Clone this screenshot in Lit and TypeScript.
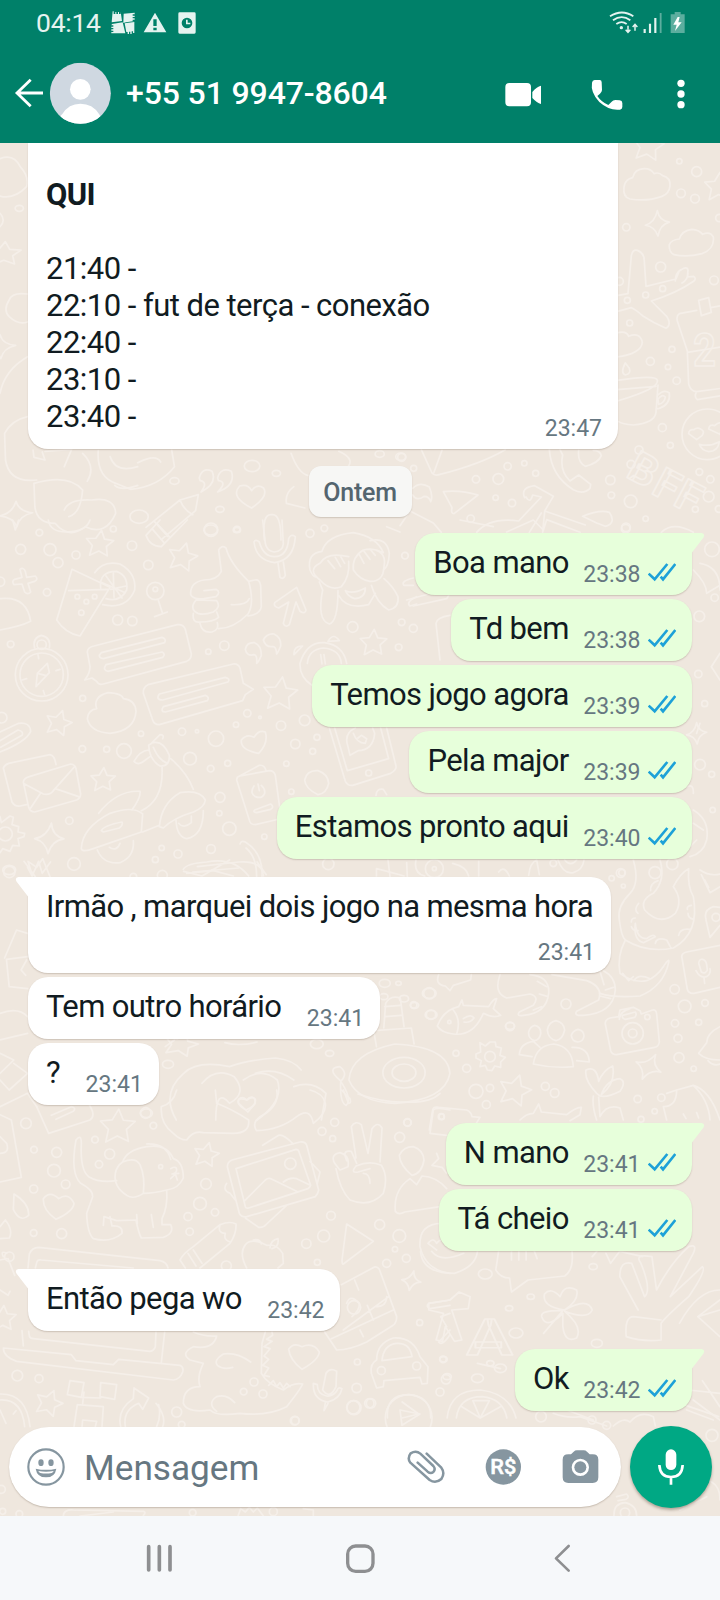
import { LitElement, html, css, svg } from "lit";
import { customElement, property } from "lit/decorators.js";
import { classMap } from "lit/directives/class-map.js";

type Dot = [number, number, number];
const dots = (list: Dot[]) => list.map(([x, y, r]) => svg`<circle cx=${x} cy=${y} r=${r}></circle>`);
const STAR = "M2 -44L14 -15L45 -12L22 9L27 40L-2 26L-32 42L-25 9L-46 -13L-15 -16Z";
const stars = (list: [number, number, number, number][]) =>
  list.map(([x, y, s, a]) => svg`<path d=${STAR} transform="translate(${x} ${y}) rotate(${a}) scale(${s})"></path>`);
const SPARK = "M0 -40Q6 -8 38 -4Q8 4 2 40Q-8 10 -38 6Q-8 -2 0 -40Z";
const sparks = (list: [number, number, number, number][]) =>
  list.map(([x, y, s, a]) => svg`<path d=${SPARK} transform="translate(${x} ${y}) rotate(${a}) scale(${s})"></path>`);

@customElement("chat-wallpaper")
export class ChatWallpaper extends LitElement {
  static styles = css`
    :host { display: block; }
    svg { display: block; }
    .doodles { fill: none; stroke: #f5efe9; stroke-width: 1.7; stroke-linecap: round; stroke-linejoin: round; }
    .doodles * { vector-effect: non-scaling-stroke; }
    .letters { font-family: Roboto, sans-serif; font-weight: 700; }
  `;
  render() {
    return html`<svg width="720" height="1373" viewBox="0 143 720 1373" aria-hidden="true">
      <g class="doodles">
        <g transform="translate(400 143) scale(.33333)">
          ${stars([[746, 8, 1, 8], [958, 130, 0.95, 0]])}
          ${sparks([[772, 241, 0.95, 0]])}
          ${dots([[838, 55, 8], [890, 86, 15], [843, 151, 13], [885, 167, 13], [679, 253, 11], [958, 225, 11], [782, 372, 15],
            [788, 437, 9], [737, 456, 9], [682, 472, 9], [942, 412, 13], [689, 540, 9], [816, 619, 9], [751, 655, 12], [804, 672, 8],
            [830, 713, 11], [787, 854, 12], [811, 907, 9], [717, 921, 12], [693, 964, 12], [631, 1011, 14], [634, 1057, 10], [692, 1075, 19],
            [898, 987, 10], [931, 1009, 11], [926, 1061, 16], [886, 1099, 9], [956, 1098, 10], [737, 1127, 8], [677, 1157, 13], [323, 970, 11],
            [373, 961, 8], [407, 991, 9], [228, 1009, 11], [295, 1008, 16], [287, 1064, 8], [336, 1080, 11], [212, 1127, 11], [41, 976, 9], [5, 943, 12], [658, 415, 12]])}
          <path d="M672 132Q676 108 698 104Q704 78 732 77Q752 76 762 92Q776 86 788 98Q812 104 810 128Q808 152 786 160Q742 176 690 168Q668 162 672 132Z"></path>
          <path d="M808 305Q814 290 838 288Q846 262 876 259Q896 260 908 274Q930 264 940 282Q944 318 906 332Q860 344 822 335Q806 326 808 305Z"></path>
          <path d="M684 452L694 338Q698 318 712 322Q734 330 733 356L738 430L828 408L838 384Q862 366 864 382L862 402L880 400Q890 406 882 414Q830 450 754 474L800 520Q816 544 798 556Q760 540 730 520Q708 500 694 494L650 506M826 414Q826 390 842 380M846 420Q864 410 864 390M650 458L684 452"></path>
          <path d="M964 488L932 494M890 502L838 512Q828 518 832 534L862 624L866 724Q872 746 890 746L964 736M862 628L964 612M896 472L926 464L934 508L904 518ZM888 750Q882 762 892 770L964 758"></path>
          <text class="letters" x="880" y="668" font-size="138" textLength="68" lengthAdjust="spacingAndGlyphs">2</text>
          <path d="M650 570Q680 562 686 580Q720 566 727 598Q724 632 650 642M676 660Q660 690 676 696Q694 692 688 676ZM652 712Q770 694 772 712Q780 736 652 774M652 740Q700 736 768 730M774 726L768 808Q764 840 700 846Q668 844 656 836M774 756Q792 738 808 750Q812 784 778 796L768 798M774 768Q786 752 796 762Q794 780 776 784Z"></path>
          <circle cx="922" cy="874" r="76"></circle>
          <path d="M866 872Q866 858 882 860Q890 852 902 858Q916 864 906 878L890 890ZM926 858Q928 842 944 848Q958 832 970 846L960 874ZM898 904Q930 912 958 896Q954 926 926 926Q904 922 898 904Z"></path>
          <g class="letters" font-size="128" transform="translate(18 22) rotate(28 650 990)"><text x="650" y="976">B</text><text x="740" y="984">F</text><text x="814" y="984">F</text></g>
          <path d="M64 920L96 990Q104 1000 120 994Q240 964 316 920M126 922L102 988M130 1046Q180 1040 234 1056L162 1112Q152 1112 156 1094ZM448 920Q454 1000 520 1040Q550 1056 570 1036L572 1024L536 996L510 1014Q478 984 488 936L480 920M536 922Q532 958 556 970Q596 960 604 938Q600 922 580 922M38 1036Q60 1014 88 1032Q100 1060 92 1076Q88 1060 72 1060Q50 1076 38 1056M374 1064Q360 1034 404 1028L460 1060L434 1104L556 1146M378 1062Q390 1084 398 1056L424 1062L356 1134Q270 1122 230 1168M434 1106L428 1168L440 1130L540 1168M388 1168L424 1110M548 1120Q600 1098 628 1108Q650 1140 616 1150L590 1140ZM0 1148L30 1104L100 1140L124 1168M784 1168Q820 1134 880 1168"></path>
        </g>
        <g transform="translate(0 140) scale(.4591 .33333)">
          ${stars([[10, 340, 0.8, 0]])}
          ${sparks([[0, 620, 0.9, 0], [35, 1122, 0.95, 0]])}
          ${dots([[827, 942, 10], [873, 950, 11], [380, 1023, 10], [602, 1000, 9], [303, 1130, 20], [549, 978, 17], [479, 1108, 9], [459, 1170, 15], [516, 1170, 8], [42, 205, 9]])}
          <path d="M0 56Q30 40 44 80Q64 110 58 140Q30 180 0 168M0 220Q14 240 0 260M60 462Q26 456 20 480Q6 510 20 530Q40 556 60 546M60 650Q10 690 0 760M60 830Q26 840 10 880L12 960Q20 1030 80 1020M72 930L74 952L98 960L92 936M98 934L156 928L140 980M74 1030Q150 1000 180 1050Q176 1120 150 1130M140 1110Q150 1076 200 1080Q250 1070 252 1120Q230 1190 186 1160Q150 1200 120 1150Q80 1150 76 1100L74 1030"></path>
          <path d="M180 940Q210 980 190 1024M214 932Q210 1010 252 1030L284 1048Q346 1040 380 980L374 930M240 950Q252 1000 300 980M300 968Q340 940 350 966M250 1036Q264 1054 300 1036M434 1014Q440 980 462 994Q474 1030 438 1056Q454 1026 436 1022ZM474 1014Q480 980 504 994Q514 1036 474 1056Q496 1026 476 1022ZM548 1104Q500 1070 522 1038Q540 1030 548 1052Q560 1030 574 1044Q586 1070 548 1104M318 1162L392 1080L432 1064L426 1112L352 1198M336 1144L366 1190M392 1080Q400 1110 420 1124M634 940Q650 1000 670 1006M738 934Q780 960 750 990M640 1040Q620 1060 624 1090L664 1104M576 1200Q570 1120 592 1124Q612 1120 612 1200"></path>
        </g>
        <g transform="translate(0 520) scale(.33333)">
          ${stars([[300, 70, 0.9, 4], [549, 110, 0.95, 12], [842, 520, 1.12, 4], [1121, 367, 0.88, 0], [177, 608, 0.85, 14], [310, 778, 0.8, 0]])}
          ${sparks([[148, 955, 1.15, 8]])}
          ${dots([[118, 38, 10], [150, 89, 18], [62, 88, 15], [174, 128, 15], [228, 105, 12], [340, 27, 9], [396, 77, 14], [633, 29, 20], [711, 28, 9],
            [445, 135, 14], [141, 217, 11], [466, 213, 26], [466, 208, 7], [353, 300, 15], [397, 303, 14], [32, 373, 10], [673, 377, 14], [625, 395, 8], [248, 535, 9],
            [930, 40, 12], [973, 25, 10], [1058, 321, 16], [1205, 307, 10], [1240, 325, 12], [1196, 382, 10], [742, 580, 11], [780, 592, 4], [708, 614, 8], [843, 617, 14],
            [914, 601, 16], [886, 672, 14], [951, 652, 9], [938, 694, 9], [648, 656, 23], [570, 716, 19], [546, 635, 11], [591, 634, 5], [423, 641, 8], [372, 693, 22],
            [320, 688, 9], [247, 687, 10], [632, 746, 10], [683, 730, 9], [859, 731, 8], [660, 832, 15], [658, 880, 8], [688, 926, 20], [208, 902, 11], [222, 1032, 19],
            [485, 984, 8], [534, 1002, 12], [466, 1019, 9], [633, 987, 13], [793, 950, 8], [874, 815, 8], [985, 1032, 17], [28, 1056, 17], [487, 1066, 15], [400, 1070, 10], [5, 593, 16], [1215, 107, 10], [0, 185, 14], [16, 942, 21]])}
          <path d="M145 0Q150 36 200 36Q260 34 270 0M38 0L46 30L56 0M438 46L480 0M438 46Q450 80 484 80L562 0M470 10L510 52M456 26L492 68M60 148Q70 140 76 154L80 172L106 168Q116 178 104 184L84 190L92 216Q84 226 74 216L66 192L42 194Q34 184 44 178L66 172ZM0 236Q80 226 92 304Q60 320 0 330"></path>
          <path d="M216 148L330 202L240 348Q196 340 170 300ZM206 212L322 208M284 158Q310 120 360 132Q410 160 404 210Q380 270 308 254M332 208L378 198M340 160L342 232M302 186L376 218M318 168L366 234M302 204Q296 154 350 154Q386 168 380 210Q360 248 318 236"></path>${dots([[232, 230, 7], [259, 245, 7], [284, 230, 7], [244, 278, 8]])}
          <path d="M474 238L487 278M464 290L502 276M656 90Q664 74 678 84Q690 130 746 184Q764 250 744 282Q700 326 656 326M656 90L664 154Q652 180 612 180Q570 186 572 224Q580 240 612 236L648 230Q664 216 648 208L612 212M590 238Q570 260 584 274Q600 290 640 276Q664 262 650 242L590 240M580 280Q576 310 600 306Q640 306 656 292L650 276M600 310Q606 340 636 336Q658 330 652 308M694 254Q740 256 748 236M746 184L764 180Q778 176 782 196L784 260Q780 284 744 288"></path>
          <path d="M788 0L796 70Q800 92 822 96Q848 94 850 72L846 0M762 66Q768 120 824 128Q882 120 886 50Q872 40 866 56Q862 110 824 110Q790 110 778 66Q766 56 762 66M834 130L840 172Q850 180 856 166L850 126M890 202L918 270Q916 284 900 274L888 246L868 314Q856 324 850 310L866 246L836 264Q820 260 824 248Z"></path>
          <path d="M966 94Q980 46 1060 38Q1130 50 1150 98Q1120 82 1090 90Q1056 110 1060 150Q1080 180 1110 184Q1150 186 1152 140Q1160 100 1126 90M1046 110Q980 94 960 130Q920 150 960 180Q990 214 1024 200Q1050 170 1046 124M966 94Q920 100 930 150Q940 174 950 170M1110 62Q1160 50 1168 100Q1166 140 1150 150M984 122L1004 146M1006 112L1022 140M1022 110L1034 130M1078 104L1092 130M1092 94L1110 118M1112 90L1126 106M958 186L968 210Q950 300 988 312Q1014 304 1014 212M1036 212Q1060 224 1096 204Q1096 234 1064 236Q1044 230 1036 212M1016 226Q1040 270 1106 254L1126 220M1114 196Q1130 250 1166 270Q1198 264 1194 230Q1180 200 1152 176M1240 174Q1200 184 1212 196L1240 196M1250 230Q1216 246 1230 258L1250 252"></path>
          <circle cx="125" cy="464" r="79"></circle><circle cx="125" cy="464" r="65"></circle><path d="M142 430L148 458L108 500L112 460ZM112 460L136 466M114 404L116 416M130 512L134 524M66 480L80 476M168 452L180 448M104 384Q96 354 124 346Q154 352 148 384"></path><circle cx="125" cy="374" r="14"></circle>
          <path d="M262 396Q262 382 282 378L532 314Q550 312 556 328L574 402Q574 418 560 424L310 492Q296 496 290 484L276 474L254 480Q270 460 270 440ZM304 398L486 352Q500 356 494 368L310 416Q290 412 304 398ZM318 434L486 396Q498 402 488 412L324 454Q306 450 318 434ZM444 494L700 432Q714 430 720 444L730 490L760 508L736 524L728 542L478 614Q462 614 458 600L430 520Q428 502 444 494ZM478 522L676 472Q692 476 684 486L488 540Q466 540 478 522ZM490 560L616 526Q630 532 622 542L496 576Q480 576 490 560Z"></path>
          <path d="M262 596Q264 570 290 566Q278 530 324 518Q366 520 370 536Q406 540 408 574Q404 632 330 640Q270 636 262 596ZM0 636L56 610Q90 606 92 634Q80 664 0 696M0 662L54 630Q72 634 66 646L2 682M776 700Q720 690 724 660Q740 640 762 652Q776 628 796 636Q806 670 776 700ZM736 388Q740 366 764 368Q784 376 784 406Q776 426 770 430Q772 404 762 404Q740 410 736 388ZM790 360Q800 340 822 342Q844 352 842 378Q834 398 830 402Q828 378 818 380Q796 382 790 360ZM882 404Q880 378 908 378ZM984 364Q1000 336 1018 362ZM936 496Q898 470 900 430Q920 364 974 368Q1030 376 1040 430M922 430Q926 388 970 384Q1020 388 1024 430M962 404L966 432M972 404L976 432"></path>
          <path d="M10 744Q14 734 26 730L150 704Q164 706 168 734M10 744L36 846Q44 860 60 858L80 854M70 786Q72 774 88 770L212 732Q226 734 228 746L242 822Q242 834 230 840L104 876Q90 876 86 862ZM74 792L130 822Q150 826 160 812L222 742M92 864L120 822M166 806L236 830"></path>
          <path d="M244 986Q246 924 330 880Q400 856 428 882L424 936Q360 958 280 986Q248 998 244 986ZM296 880Q350 810 420 814Q424 830 396 870M304 932Q312 916 366 906Q370 916 358 924L310 936ZM292 990Q310 1034 360 1028Q404 1010 400 962M328 982Q350 996 360 970M424 872Q492 840 486 740M428 936L478 916M478 920Q484 850 540 818Q600 808 616 840Q614 862 580 876Q520 894 490 924ZM512 716Q560 756 580 808M528 900Q530 950 560 956Q610 946 610 872M536 910Q550 928 574 908L574 888M446 676Q448 720 480 738Q510 740 508 706Q490 660 458 668ZM460 682Q476 720 502 730M402 724Q420 692 446 690M402 724Q412 736 428 726L450 710M456 668L480 644Q494 644 488 656"></path>
          <path d="M710 780Q710 770 720 768L808 752Q822 752 826 766L842 884Q840 898 826 900L766 914Q750 914 748 900ZM712 772L778 736Q794 734 798 752M764 870L812 852Q824 860 812 868L770 878Q758 876 764 870ZM774 792L778 812M762 798Q748 820 766 830Q786 838 794 820Q796 806 784 796"></path>
          <path d="M988 624L1036 784Q1044 798 1058 796L1172 760Q1190 750 1188 738L1160 624M1004 624L1042 752L1166 716L1142 624M1050 706L1044 680Q1030 640 1066 624M1050 706L1074 692Q1120 690 1124 640L1118 624M1060 640Q1070 670 1096 670L1100 656L1084 646L1074 654"></path><circle cx="1106" cy="759" r="9"></circle>
          <path d="M954 824Q916 806 914 780Q920 750 954 752Q984 762 986 790Q980 820 954 824ZM0 890L4 908L30 888L40 892L36 914L56 920L54 936L74 940L72 950L54 956L58 978L38 976L30 994L8 986L0 998M72 1024L106 1070M96 1064L84 1024L110 1042L128 1016L150 1070M550 1048Q560 1030 620 1026Q700 1010 746 1068M560 1060L640 1052L700 1068M720 972Q724 960 736 966Q790 1000 786 1070M738 984Q770 1010 770 1070M1128 826Q1130 804 1150 808L1160 824M1164 1020L1170 1070M1220 1028L1222 1070"></path>
        </g>
        <g transform="translate(260 520) scale(.33333)">
          <path d="M1320 130Q1380 140 1380 210M1300 150Q1340 190 1340 220L1380 196M540 420L528 310Q530 292 570 286M440 240L550 210Q580 210 560 236L460 258M380 20L420 36M600 0L700 20M740 36L820 0L850 30M1310 640L1320 610M1300 820Q1302 790 1280 800M1300 870Q1350 900 1340 960Q1330 1000 1290 1010M1300 910L1330 930M1290 980L1310 960M1380 400L1354 440L1380 480"></path>
          ${sparks([[1310, 640, 0.8, 0]])}${dots([[1318, 289, 16], [1364, 233, 11], [1315, 462, 11], [1334, 551, 9], [1320, 734, 16], [1355, 763, 9], [1358, 870, 8], [1356, 88, 22], [1098, 22, 13], [1086, 1058, 10], [1185, 1058, 18], [880, 1030, 10]])}
        </g>
        <g transform="translate(400 860) scale(.33333)">
          ${stars([[346, 690, 1.05, 14]])}${sparks([[746, 620, 1.05, 30]])}
          ${dots([[103, 26, 27], [103, 26, 6], [662, 39, 13], [635, 55, 8], [670, 78, 6], [817, 12, 17], [88, 400, 17], [41, 435, 10], [93, 464, 14], [498, 432, 15], [330, 499, 13],
            [824, 388, 14], [854, 439, 19], [915, 429, 10], [896, 487, 9], [825, 490, 11], [834, 535, 12], [837, 593, 15], [881, 626, 8], [168, 580, 9], [200, 625, 12], [228, 694, 21],
            [270, 684, 11], [259, 734, 12], [436, 679, 12], [464, 699, 13], [713, 717, 11], [784, 713, 11], [764, 754, 8], [723, 778, 9], [948, 172, 12], [22, 787, 11], [742, 471, 8], [148, 486, 5], [698, 520, 32], [698, 520, 13], [270, 590, 16], [124, 770, 9]])}
          <path d="M48 0Q40 40 74 48M158 10Q200 20 206 48M236 4L236 48M296 36Q312 14 328 48M386 46Q390 8 410 0L418 44M474 0Q490 44 520 38Q548 30 552 0M494 0Q512 22 530 0"></path>
          <path d="M700 0Q720 70 690 100Q650 140 658 180Q664 230 676 240Q650 290 660 340Q700 370 740 362Q770 350 790 320Q810 290 806 308Q790 380 720 408Q640 414 600 400M780 0Q798 60 760 100Q720 120 734 150Q780 200 826 160Q850 120 820 80Q840 40 866 26Q862 80 880 110Q900 220 820 264Q740 280 676 240M706 190Q700 240 730 248L766 230Q760 220 740 236Q710 236 706 190M716 130Q700 150 714 160M694 186Q694 174 706 174M714 212Q700 214 694 200M752 92Q750 70 774 62M766 250Q770 230 800 240L812 262M836 226Q840 204 870 208M862 148Q860 138 874 136M864 160Q864 176 882 178M668 340L686 362L700 350M702 362Q714 340 750 356"></path>
          <path d="M300 344Q280 400 320 414L390 402Q420 410 400 436L358 456Q348 470 370 466Q440 460 446 400Q450 350 390 344M456 344L560 362Q610 380 596 420L530 454Q520 468 550 466Q640 460 646 390Q646 350 610 332M412 364L440 380M418 402L444 410M400 450L424 440M600 334L612 374M640 382L616 390M600 408L632 416M116 344Q104 374 136 378L150 392L160 376L212 360L214 344M112 498Q130 450 176 440L186 420L190 436L266 440Q280 416 290 416L280 446L302 466Q280 476 250 460Q220 530 160 522Q124 518 112 498ZM160 450Q184 480 170 522M190 476Q214 460 222 474Q210 490 192 486"></path>
          <path d="M404 496Q424 500 422 522Q418 540 404 542Q384 536 386 516Q390 500 404 496ZM468 482Q492 488 494 510Q488 538 468 542Q444 536 442 510Q446 486 468 482ZM534 508Q552 512 552 528Q550 544 534 546Q516 544 514 526Q518 512 534 508ZM400 612Q408 556 462 552Q516 560 520 620Q460 626 400 612ZM396 590L358 584Q360 550 400 544L420 562M516 562Q566 560 568 606L530 602M616 492Q614 480 630 474L656 470L660 450L700 442L720 452L724 462L758 450Q768 448 770 462L778 546Q776 560 764 562L650 584Q636 584 632 572ZM668 466L706 456Q712 464 704 472L676 478Q664 474 668 466ZM658 478Q660 454 690 446M900 30Q930 50 960 42M904 44L930 98L960 80M926 82L914 60M918 178Q910 150 940 140L960 142M918 180L930 232L960 196M846 294Q842 280 860 276L960 256M846 294L862 388Q866 402 882 400L960 382M896 310Q898 296 908 298Q918 300 920 314L922 330Q916 344 904 336ZM888 332Q900 356 920 350Q934 340 930 326M912 354L914 370M960 500Q920 520 920 548L896 580Q916 600 960 600M924 602Q940 620 960 612"></path>
          <path d="M240 548L256 558L270 546L286 546L288 560L304 564L300 586L316 592L302 606L302 622L284 618L276 632L262 630L256 616L240 620L244 602L228 594L228 582L242 576ZM590 700Q552 660 558 630Q590 616 596 664Q610 630 638 618Q648 670 604 704Q620 660 660 656Q680 664 660 694Q620 714 600 708ZM580 708Q576 740 590 780M596 712L600 770Q620 730 660 744L670 780M88 810L98 750Q100 740 116 742L200 750Q214 756 216 770L240 772L230 788M360 780Q380 760 400 760L416 732L424 756L500 764Q530 740 544 742L540 764L510 782M800 780L790 740Q830 740 830 690L880 676Q926 720 930 780M880 676Q930 690 960 780M830 690L800 700M850 762L858 776M890 758L896 774"></path>
        </g>
        <g transform="translate(0 860) scale(.4591 .33333)">
          ${stars([[395, 552, 0.8, 15]])}
          ${dots([[935, 400, 15], [903, 436, 9], [939, 464, 13], [838, 370, 12], [868, 370, 6], [366, 613, 12], [319, 760, 13], [1111, 498, 10], [880, 638, 46], [880, 638, 26], [690, 552, 14], [718, 580, 9], [836, 410, 9], [880, 416, 10], [20, 30, 14]])}
          <path d="M760 660Q764 580 860 552Q976 560 980 640Q970 720 860 730Q780 726 760 660ZM836 504L840 430Q850 404 872 414L880 500M820 560L814 512L896 504L902 552M838 440L872 436M840 470L874 466M740 660Q710 624 740 620Q760 640 742 664Q740 730 754 736Q768 720 744 668M384 780Q350 700 400 640Q430 600 500 620Q540 600 600 594Q640 600 656 630M440 670Q470 620 510 650Q540 700 500 730Q470 680 470 780M530 660Q570 620 604 660Q620 720 560 780M640 680Q680 660 710 700L700 780M540 756L520 730Q516 710 538 720Q556 702 556 730ZM556 640Q600 620 640 660M60 290L14 298L20 380L60 386M10 294L36 210L60 220M58 300L46 330L56 346M0 460Q40 440 60 470M0 540L60 520M0 580L30 600L0 640M30 610L60 640L20 690L0 660M60 22L70 48L84 4L92 40L110 6M400 34L440 48L500 0M430 20L520 6Q570 0 574 48M420 36L520 24M560 6L580 44M820 48L820 26Q860 40 880 48M0 740L60 700L80 740M360 560L380 540M490 548Q520 560 560 546"></path>
        </g>
        <g transform="translate(0 1090) scale(.33333)">
          ${stars([[354, 108, 1.15, 0], [620, 193, 0.82, 10], [10, 684, 0.85, 0], [148, 938, 0.88, 18]])}${sparks([[1234, 572, 0.75, 15]])}
          ${dots([[78, 100, 16], [437, 69, 16], [460, 107, 10], [285, 149, 10], [102, 179, 10], [170, 187, 15], [329, 192, 15], [297, 223, 11], [162, 242, 19], [197, 283, 13], [101, 297, 12],
            [618, 282, 16], [600, 341, 19], [564, 380, 12], [645, 367, 11], [569, 425, 11], [101, 429, 10], [185, 431, 15], [28, 500, 14], [679, 528, 15], [482, 230, 6],
            [1004, 97, 12], [966, 124, 12], [998, 146, 9], [1223, 98, 11], [1199, 142, 15], [993, 377, 13], [1139, 404, 15], [971, 438, 18], [919, 461, 14], [952, 517, 9], [1198, 438, 19], [1185, 478, 8],
            [1219, 505, 12], [1160, 520, 12], [1062, 652, 20], [1259, 698, 9], [1072, 816, 9], [1144, 842, 12], [1250, 828, 12], [1329, 808, 10], [1338, 868, 14], [1320, 906, 12], [1070, 894, 14], [1062, 953, 21], [1113, 940, 14],
            [886, 992, 12], [52, 857, 16], [117, 866, 12], [762, 876, 12], [731, 905, 10], [789, 912, 12], [530, 966, 15], [545, 1004, 10], [871, 221, 17], [1325, 80, 8]])}
          <path d="M0 276L64 262L34 90L0 74M0 190Q30 190 20 160L0 140M110 50L146 130L270 90Q284 80 276 60L266 40M154 76L214 50Q230 54 220 64L168 88M484 50Q480 100 520 130Q540 150 560 150Q580 120 610 128L700 130Q750 130 746 90Q700 60 650 40L646 0M530 0Q520 40 484 50M830 0Q840 50 780 80Q754 100 770 122Q840 120 890 80Q930 50 940 100Q980 70 976 40Q970 10 930 0M738 60Q704 40 718 26Q730 18 740 30Q756 14 766 28Q770 46 738 60ZM1030 0L1046 40Q1054 40 1050 26L1024 0M1074 12Q1160 40 1216 36Q1290 40 1320 10M168 388Q128 360 130 326Q150 300 176 326Q206 306 222 340Q220 364 168 388ZM42 312Q88 340 86 376Q60 400 40 358ZM0 410L16 390Q40 420 28 444L0 446"></path>
          <path d="M228 150Q244 130 244 160Q240 240 266 260Q300 280 350 272M228 150Q210 250 242 280Q280 300 278 320L260 370Q262 430 280 446Q330 460 366 430Q370 406 336 408L330 380M310 406L312 380L350 392L408 390Q416 430 424 444L490 442Q524 430 512 404L486 404L486 386M410 374L412 400M454 374L460 412M486 386Q504 350 500 300M368 216Q380 180 440 170Q500 160 520 206Q550 216 550 264Q536 296 500 300Q460 310 432 310M368 216Q406 200 420 224Q436 260 430 310Q400 330 380 316Q340 290 346 250Q350 228 368 216M512 236Q530 226 530 240Q530 250 516 252L536 250M512 266L526 252L532 270M440 162Q500 160 512 208"></path>
          <path d="M682 230Q682 216 696 210L900 156Q916 154 920 166L956 300Q954 312 946 320L740 380Q724 382 718 370ZM708 236L888 178Q896 178 898 188L932 286Q930 292 924 296L746 354Q738 356 736 350ZM732 334L796 270Q806 262 816 268L890 304M850 276Q870 260 890 266L928 284M788 166L836 136Q850 132 880 162M680 280Q666 300 690 310L706 330M930 214L960 246L952 280M736 384L776 412Q790 414 800 402L860 346"></path>
          <path d="M1004 220Q990 194 1020 188Q1050 196 1044 230L1020 240ZM1040 212L1036 200Q1030 180 1054 184L1070 220M1068 204L1054 110Q1066 90 1084 104L1104 190L1116 116Q1134 92 1146 114L1140 216M1008 236Q1020 300 1050 330Q1110 354 1150 310Q1166 260 1144 226Q1110 210 1068 228Q1050 250 1074 246L1110 236M1090 250Q1110 250 1110 280M1236 256Q1200 226 1198 196Q1210 170 1240 170Q1270 180 1272 210Q1266 250 1236 256ZM1186 364Q1180 300 1230 266L1250 284L1266 258Q1310 260 1340 296M1186 364Q1196 376 1214 366L1320 350M1290 130L1300 60Q1310 50 1350 60M1290 130L1340 136M1296 226L1316 206L1310 190M1296 226L1326 232L1340 250M1326 400Q1256 400 1260 470Q1276 540 1350 550M1284 460Q1300 440 1310 460Q1324 440 1340 460M1284 460L1310 480"></path>
          <path d="M540 510Q550 490 580 470L660 404Q690 392 708 402Q710 430 690 460L600 534M564 490L588 528M580 480L606 520M540 510L556 534M660 404Q652 430 676 430Q670 450 690 456M740 534Q716 490 736 464Q750 446 784 458L800 466Q830 460 848 490L850 520L834 534M784 462Q780 446 760 450M810 474Q812 450 834 446Q838 470 816 476M1040 402L1120 454L1030 522Q1026 524 1026 510ZM84 534L88 492Q96 472 116 472L480 512Q500 516 504 534M106 534L110 518Q112 508 124 510L400 534M24 506L44 556M10 500Q0 480 20 490M20 506L0 510M30 604L24 616L0 600M66 722L70 768M86 724L88 738Q90 746 100 746L450 784Q462 782 466 770L468 726M494 726L484 818M10 774L214 794L228 812L340 824L356 808L540 826Q552 832 548 846Q540 868 520 870L50 814Q10 800 10 774Z"></path>
          <path d="M210 872L252 878L244 922L202 914ZM302 878L350 884L344 928L300 920ZM244 922L302 924M232 944L310 950L306 1010M232 944L222 1010M246 1010L248 990L290 994L286 1010M252 906L248 940M402 894L446 924L428 958L416 940Q368 960 376 1010M402 894L400 926Q350 960 362 1010M468 940Q500 980 488 1010M476 944Q484 980 470 1010M0 912Q80 910 90 1010M0 930Q66 926 74 1010M0 960L18 1000M40 972L48 962"></path>
          <path d="M580 726Q610 740 650 738Q640 780 580 770Q540 790 570 810L610 820Q590 860 600 890Q550 890 550 940Q560 970 630 960Q650 980 720 970Q800 980 860 950Q900 900 908 882Q880 876 850 900Q800 880 784 850L786 760L796 726M752 816Q710 786 670 792Q640 810 652 826Q670 840 698 832M704 938Q680 910 650 920Q620 940 650 964M816 726L818 736L800 748L816 754L792 770L810 776L792 798L806 808L788 826L806 834L792 856L808 860M806 886L820 872L830 890L840 878L850 894L860 880L870 890M906 838Q870 810 866 778Q880 756 906 770Q940 756 958 786Q956 810 906 838ZM968 900L978 850Q990 832 1010 844L1008 890Q990 930 968 900ZM940 880Q938 930 984 936Q1020 926 1026 896Q1014 890 1012 900Q1000 920 980 918Q952 912 952 884ZM976 938L972 962L984 940M1118 534Q1130 526 1138 538L1190 680Q1190 700 1176 708L1100 756Q1050 780 1010 780L974 726M1030 720L1166 620M994 746L1180 660M1024 584L1118 534M1064 570L1076 600M1102 646L1120 690M1126 650Q1160 650 1160 620M1080 720L1090 740M1040 640Q1050 610 1078 640Q1080 660 1056 680"></path>
          <path d="M1130 810Q1130 760 1180 744Q1240 740 1260 800L1284 830L1282 880L1266 882L1260 862L1152 872L1150 890L1130 894L1114 850Q1110 820 1130 810ZM1146 812Q1150 764 1190 760Q1230 758 1236 800ZM1200 960L1260 972L1206 1006ZM1350 630L1286 640Q1276 650 1290 656L1350 646M1350 670L1322 680L1340 710M1350 720L1316 756Q1326 770 1350 734"></path><circle cx="1226" cy="984" r="70"></circle>
        </g>
        <g transform="translate(0 1110) scale(.4591 .33333)">
          ${dots([[1057, 492, 15], [1124, 669, 15], [1300, 700, 12], [1109, 595, 8], [1156, 560, 8], [1292, 470, 9], [966, 748, 8], [974, 800, 9], [1040, 805, 13], [1090, 775, 13], [1068, 760, 8]])}
          <path d="M916 424Q920 490 990 490Q1036 470 1040 424M940 424Q960 460 1010 430M1086 424L1080 480Q1090 504 1110 504L1114 546L1150 510L1230 498Q1250 480 1246 424M1114 424L1114 450M1130 424L1130 450M1146 424L1146 450M1164 424L1170 446M1320 430L1330 460L1350 424L1400 440M1390 600L1350 500Q1350 450 1376 460L1404 560Q1420 540 1396 460Q1380 430 1420 440L1430 540Q1460 460 1500 410Q1520 400 1510 430L1460 560L1530 470Q1540 480 1500 560Q1450 620 1440 640L1440 690Q1400 696 1364 680Q1360 620 1380 620L1440 630M1480 640Q1520 540 1568 540M1520 620L1568 570M1568 680L1520 620L1568 600M1300 424L1290 440M1230 600Q1180 590 1186 552Q1200 530 1220 560Q1230 520 1256 540Q1262 570 1230 600Q1280 560 1290 600Q1280 630 1230 604Q1270 650 1256 684Q1230 700 1226 650L1226 610Q1190 660 1180 620Q1176 600 1226 602L1184 670M934 580L980 570L1000 546L1024 560L1020 596L984 600L1006 690L990 694L970 650L964 694L950 690L966 610L934 600Z"></path>
          <text class="letters" x="1016" y="736" font-size="150" textLength="86">A</text>
          <path d="M844 924Q840 854 890 854Q940 860 938 924M876 876L912 912L876 924M974 924Q980 840 1046 840Q1110 850 1124 924M994 924Q1000 860 1050 860Q1096 866 1104 924M1046 924L1030 872L1066 872ZM1046 924L1006 890M1046 924L1090 890M1040 760L1090 776M1500 840L1568 850M1510 870L1568 930M1530 812L1568 890"></path>
        </g>
        <g transform="translate(360 1400) scale(.33333)">
          ${dots([[543, 50, 16], [696, 60, 12], [740, 76, 12], [28, 10, 14], [1056, 106, 18], [795, 338, 14]])}
          <path d="M580 40Q620 56 660 50L740 78M620 30L700 60M760 78Q790 50 810 66Q840 30 880 50L886 78M960 10L1076 50M980 30L1060 60M770 290L800 282Q810 292 798 298L774 302M762 348Q760 310 796 308Q830 316 830 348M960 330L1040 290M1040 240Q1080 250 1080 300"></path>
        </g>
        <g transform="translate(0 1400) scale(.33333)">
          ${dots([[8, 334, 9], [58, 342, 10], [578, 338, 10], [4, 268, 12], [820, 335, 12], [884, 62, 13], [1060, 22, 20]])}
          <path d="M190 348Q190 328 220 330L430 334Q440 336 430 346M240 348L340 336M714 348L722 326L736 336L748 322L760 336L772 324L790 348M910 326L940 330L940 348"></path>
        </g>
      </g>
    </svg>`;
  }
}

@customElement("message-bubble")
export class MessageBubble extends LitElement {
  @property() text = "";
  @property() time = "";
  @property({ type: Boolean }) out = false;
  @property({ type: Boolean }) tail = false;
  @property({ type: Boolean }) below = false;
  @property({ type: Boolean }) list = false;
  static styles = css`
    :host { display: flex; }
    .bubble { position: relative; display: flex; box-sizing: border-box; height: 62px; margin: 0 28px; padding: 11px 18px 14px 18px;
      border-radius: 20px; background: #fff; color: #111b21; box-shadow: 0 1px 1.5px rgba(80, 60, 40, .22);
      font-size: 31px; line-height: 37px; letter-spacing: -.63px; white-space: pre; }
    .in { gap: 25.5px; padding-right: 16px; }
    .out { gap: 14.5px; margin-left: auto; padding-right: 16px; background: #e7ffdb; }
    .tail-in { border-top-left-radius: 0; }
    .tail-out { border-top-right-radius: 0; }
    .below { flex-direction: column; gap: 0; height: 96px; padding-right: 18px; }
    .list { width: 590px; height: 306px; padding-top: 33px; border-top-left-radius: 0; border-top-right-radius: 0; justify-content: space-between; letter-spacing: -.53px; }
    .title { font-weight: 700; letter-spacing: -.6px; }
    .meta { display: flex; align-items: flex-end; align-self: flex-end; gap: 7.5px; height: 27px; margin: auto 0 -7px;
      color: #667781; font-size: 23px; line-height: 27px; letter-spacing: 0; }
    .below .meta { margin-right: -2px; }
    .checks { margin-bottom: 6px; }
    .point { position: absolute; top: 0; }
    .point-in { left: -13px; }
    .point-out { right: -13px; }
  `;
  render() {
    const [head, ...rest] = this.text.split("\n");
    return html`<div class=${classMap({ bubble: true, in: !this.out, out: this.out, below: this.below, list: this.list, "tail-in": this.tail && !this.out, "tail-out": this.tail && this.out })}>
      ${this.tail ? this.out
        ? html`<svg class="point point-out" width="14" height="21" viewBox="0 0 14 21"><path d="M0 0H10.5Q14.5 .5 12.5 4.5L1 19.5V21H0Z" fill="#e7ffdb"></path></svg>`
        : html`<svg class="point point-in" width="14" height="21" viewBox="0 0 14 21"><path d="M14 0H3.5Q-.5 .5 1.5 4.5L13 19.5V21H14Z" fill="#fff"></path></svg>` : ""}
      <div>${this.list ? html`<span class="title">${head}</span>${"\n" + rest.join("\n")}` : this.text}</div>
      <div class="meta"><span>${this.time}</span>${this.out ? html`<svg class="checks" width="28" height="19" viewBox="0 0 84 57" fill="none" stroke="#1da1d8" stroke-width="8"><path d="M2 32L20 49L58 3M38 41L45 49L82 3"></path></svg>` : ""}</div>
    </div>`;
  }
}

@customElement("app-root")
export class AppRoot extends LitElement {
  static styles = css`
    :host { display: flex; flex-direction: column; width: 720px; height: 1600px; overflow: hidden; font-family: Roboto, sans-serif; background: #efe7de; }
    svg { display: block; flex: none; }
    .status { display: flex; align-items: center; height: 47px; padding: 0 35px 0 36px; box-sizing: border-box; background: #008069; color: #e5f3f0; }
    .clock { font-size: 26.5px; line-height: 45px; height: 47px; letter-spacing: -.25px; width: 75px; }
    .grow { flex: 1; }
    .bar { display: flex; align-items: center; height: 96px; background: #008069; color: #fff; }
    .title { margin-left: 15px; font-size: 32px; font-weight: 500; line-height: 92px; height: 96px; white-space: nowrap; letter-spacing: -.13px; }
    .chat { position: relative; display: flex; flex-direction: column; height: 1373px; overflow: hidden; }
    .paper { position: absolute; inset: 0; }
    .feed { position: relative; display: flex; flex-direction: column; gap: 4px; flex: 1; }
    .turn { margin-top: 14px; }
    .date { align-self: center; box-sizing: border-box; width: 103px; height: 51px; margin: 13px 0 12px; border-radius: 12px; background: #f7f7f5; color: #54656f;
      font-size: 25px; font-weight: 500; line-height: 54px; text-align: center; letter-spacing: -.25px; box-shadow: 0 1px 1.5px rgba(80, 60, 40, .2); }
    .composer { position: relative; display: flex; align-items: center; gap: 9px; height: 82px; padding: 0 8px 8px 9px; }
    .field { display: flex; align-items: center; box-sizing: border-box; width: 612px; height: 80px; padding: 0 22px 0 18px; border-radius: 40px; background: #fff; color: #667781; box-shadow: 0 1px 1.5px rgba(80, 60, 40, .25); }
    .hint { flex: 1; margin-left: 19px; padding-top: 3px; font-size: 35.2px; line-height: 77px; }
    .mic { display: flex; align-items: center; justify-content: center; width: 82px; height: 82px; border-radius: 50%; background: #00a884; box-shadow: 0 2px 3px rgba(60, 40, 20, .35); }
    .nav { display: flex; height: 84px; background: #f6f8fa; }
  `;
  render() {
    return html`
      <div class="status">
        <div class="clock">04:14</div>
        <svg width="86" height="47" viewBox="333 0 258 141" fill="#e5f3f0"><path d="M338 34h3v8h5v-6h3v6h5v-6h3v6h5v-7l4 28-31 4ZM371 41l33-3v5h-6v4h6v4h-6v4h6v4h-6v4h6l-26 4-8 2ZM336 72l32-5 8 33h-42v-4h6v-4h-6v-4h6v-4h-6v-4h6v-4h-6ZM374 70l29-4v33h-4v-5h-4v8h-4v-7h-4v7h-4v-6h-4Z"></path><path fill-rule="evenodd" d="M465 38L499 97H431ZM460 58V78H470V58ZM460 83V91H470V83ZM539 37H583Q587 37 587 41V97Q587 101 583 101H539Q535 101 535 97V41Q535 37 539 37ZM561 53A16 16 0 1 0 561 85A16 16 0 1 0 561 53ZM558 59H563V68H571V73H558Z"></path></svg>
        <div class="grow"></div>
        <svg width="76" height="47" viewBox="745 0 228 141" fill="none" stroke="#e5f3f0" stroke-width="5.5"><path d="M748 49Q784 26 818 49M757 61Q783 42 809 61M767 72Q783 61 798 72"></path><circle cx="782" cy="83" r="5" fill="#e5f3f0" stroke="none"></circle><path stroke-width="4.5" d="M802 77V96M795 89L802 97L809 89M823 92V73M816 81L823 73L830 81"></path><path stroke-width="6.5" d="M852 87V99M868 71V99M884 54V99"></path><path opacity=".4" d="M900 39V99"></path><path opacity=".4" fill="#e5f3f0" stroke="none" d="M942 36H960V43H972V99H930V43H942Z"></path><path fill="#fff" stroke="none" d="M951 51L938 74H948L943 93L963 67H953L957 51Z"></path></svg>
      </div>
      <div class="bar">
        <svg width="111" height="96" viewBox="0 141 333 288"><path d="M129 279H50M92 239L51 279L92 319" fill="none" stroke="#fff" stroke-width="8.5"></path><clipPath id="face"><circle cx="241" cy="280" r="91.5"></circle></clipPath><g clip-path="url(#face)"><path fill="#cfd8e1" d="M149 188H333V372H149Z"></path><circle cx="241" cy="268" r="31" fill="#fff"></circle><path fill="#fff" d="M179 372Q175 352 187 342Q206 311 241 311Q278 311 297 342Q307 352 303 372ZM170 368H312V380H170Z"></path></g></svg>
        <div class="title">+55 51 9947-8604</div>
        <div class="grow"></div>
        <svg width="220" height="96" viewBox="420 141 660 288" fill="#fff"><path d="M448 249H501Q513 249 513 261V307Q513 319 501 319H448Q436 319 436 307V261Q436 249 448 249ZM517 276Q531 259 543 257V312Q531 309 517 294Z"></path><path d="M704 240H719Q725 240 725 247L726 270Q726 275 720 281L712 288Q724 306 745 315L755 305Q759 300 766 300L779 301Q787 302 787 309V321Q787 328 780 329Q748 333 718 306Q691 277 696 248Q697 240 704 240Z"></path><circle cx="963" cy="250" r="11"></circle><circle cx="963" cy="282" r="11"></circle><circle cx="963" cy="314" r="11"></circle></svg>
      </div>
      <div class="chat">
        <chat-wallpaper class="paper"></chat-wallpaper>
        <div class="feed">
          <message-bubble list .text=${"QUI\n\n21:40 -\n22:10 - fut de terça - conexão\n22:40 -\n23:10 -\n23:40 -"} time="23:47"></message-bubble>
          <div class="date">Ontem</div>
          <message-bubble out tail text="Boa mano" time="23:38"></message-bubble>
          <message-bubble out text="Td bem" time="23:38"></message-bubble>
          <message-bubble out text="Temos jogo agora" time="23:39"></message-bubble>
          <message-bubble out text="Pela major" time="23:39"></message-bubble>
          <message-bubble out text="Estamos pronto aqui" time="23:40"></message-bubble>
          <message-bubble class="turn" tail below text="Irmão , marquei dois jogo na mesma hora" time="23:41"></message-bubble>
          <message-bubble text="Tem outro horário" time="23:41"></message-bubble>
          <message-bubble text="?" time="23:41"></message-bubble>
          <message-bubble class="turn" out tail text="N mano" time="23:41"></message-bubble>
          <message-bubble out text="Tá cheio" time="23:41"></message-bubble>
          <message-bubble class="turn" tail text="Então pega wo" time="23:42"></message-bubble>
          <message-bubble class="turn" out tail text="Ok" time="23:42"></message-bubble>
        </div>
        <div class="composer">
          <div class="field">
            <svg width="38" height="38" viewBox="83 144 114 114" fill="none" stroke="#8696a0" stroke-width="6.5"><circle cx="140" cy="201" r="53"></circle><ellipse cx="125" cy="188" rx="8" ry="10" fill="#8696a0" stroke="none"></ellipse><ellipse cx="155" cy="188" rx="8" ry="10" fill="#8696a0" stroke="none"></ellipse><path fill="#8696a0" stroke="none" fill-rule="evenodd" d="M109 206Q140 213 171 206Q167 232 140 232Q113 232 109 206ZM117 213Q119 218 123 219Q140 222 157 219Q161 218 163 213Q140 218 117 213Z"></path></svg>
            <div class="hint">Mensagem</div>
            <svg width="192" height="40" viewBox="140 141 576 120" fill="#8696a0"><path fill="none" stroke="#8696a0" stroke-width="7.5" stroke-linecap="round" stroke-linejoin="round" d="M199 161L243 203Q255 219 243 237Q226 252 208 240L150 188Q140 175 151 160Q167 150 180 161L219 198Q227 207 219 216Q211 222 202 215L172 188"></path><circle cx="429" cy="201" r="53"></circle><text x="429" y="223" fill="#fff" stroke="#fff" stroke-width="1.5" font-family="Roboto, sans-serif" font-size="62" font-weight="500" text-anchor="middle" textLength="78" lengthAdjust="spacingAndGlyphs">R$</text><path fill-rule="evenodd" d="M640 155Q644 151 650 151H670Q676 151 680 155L688 163H697Q714 163 714 179V232Q714 249 697 249H624Q607 249 607 232V179Q607 163 624 163H632ZM660 176A26 26 0 1 0 660 228A26 26 0 1 0 660 176Z"></path><circle cx="660" cy="202" r="18"></circle></svg>
          </div>
          <div class="mic"><svg width="28" height="38" viewBox="891 144 84 114" fill="none" stroke="#fff" stroke-width="8"><rect x="917" y="148" width="32" height="62" rx="16" fill="#fff" stroke="none"></rect><path d="M898 195Q900 231 933 231Q966 231 968 195M933 231V254"></path></svg></div>
        </div>
      </div>
      <div class="nav"><svg width="720" height="84" viewBox="0 348 2160 252" fill="none" stroke="#8e8f91" stroke-linecap="round" stroke-linejoin="round" stroke-width="10"><path stroke-width="11" d="M446 440V510M478 440V510M510 440V510"></path><rect x="1043" y="438" width="76" height="76" rx="24"></rect><path stroke-width="8" d="M1706 438L1668 475L1706 512"></path></svg></div>
    `;
  }
}
